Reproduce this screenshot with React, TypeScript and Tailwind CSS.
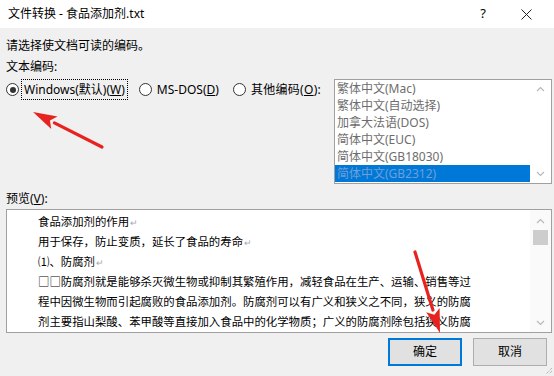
import React from 'react';

const font = { fontFamily: '"Noto Sans", "Noto Sans CJK SC", "Microsoft YaHei", sans-serif' };
const cjk = { fontFamily: '"Noto Sans CJK SC", "Microsoft YaHei", sans-serif' };

// red annotation arrow: shaft + triangular head, tip at (x2, y2)
const Arrow = ({ x1, y1, x2, y2 }: { x1: number; y1: number; x2: number; y2: number }) => {
  const dx = x2 - x1;
  const dy = y2 - y1;
  const len = Math.hypot(dx, dy);
  const ux = dx / len;
  const uy = dy / len;
  const head = 24;
  const half = 7;
  const bx = x2 - ux * head;
  const by = y2 - uy * head;
  const px = -uy;
  const py = ux;
  return (
    <g>
      <line x1={x1} y1={y1} x2={bx} y2={by} stroke="#e8231f" strokeWidth={3.2} strokeLinecap="round" />
      <polygon
        points={`${x2},${y2} ${bx + px * half},${by + py * half} ${bx + ux * 5},${by + uy * 5} ${bx - px * half},${by - py * half}`}
        fill="#e8231f"
      />
    </g>
  );
};

const Chevron = ({ up }: { up?: boolean }) => (
  <svg width="9" height="6" viewBox="0 0 9 6">
    <path d={up ? 'M1 5 L4.5 1.5 L8 5' : 'M1 1 L4.5 4.5 L8 1'} fill="none" stroke="#b8b8b8" strokeWidth="1.2" />
  </svg>
);

const Radio = ({ checked }: { checked?: boolean }) => (
  <span className="w-[13px] h-[13px] rounded-full border border-[#333] bg-white flex items-center justify-center shrink-0">
    {checked && <span className="w-[6px] h-[6px] rounded-full bg-[#333]" />}
  </span>
);

const Ret = () => <span className="text-[#a8a8a8] text-[9px] ml-[1px]">↵</span>;

const App = () => {
  const encodings = ['繁体中文(Mac)', '繁体中文(自动选择)', '加拿大法语(DOS)', '简体中文(EUC)', '简体中文(GB18030)'];

  const lines: React.ReactNode[] = [
    <>食品添加剂的作用<Ret /></>,
    <>用于保存，防止变质，延长了食品的寿命<Ret /></>,
    <>⑴、防腐剂<Ret /></>,
    '□□防腐剂就是能够杀灭微生物或抑制其繁殖作用，减轻食品在生产、运输、销售等过',
    '程中因微生物而引起腐败的食品添加剂。防腐剂可以有广义和狭义之不同，狭义的防腐',
    '剂主要指山梨酸、苯甲酸等直接加入食品中的化学物质；广义的防腐剂除包括狭义防腐'
  ];

  return (
    <div className="w-[554px] h-[376px] bg-[#f0f0f0] relative overflow-hidden text-[12px] text-black" style={font}>
      {/* Title bar */}
      <div className="h-[28px] bg-white flex items-center pl-[8px]">
        <span className="text-[12px]">文件转换 - 食品添加剂.txt</span>
        <span className="ml-auto text-[13px] w-[20px] text-center mr-[28px]">?</span>
        <svg width="11" height="11" viewBox="0 0 11 11" className="mr-[22px]">
          <path d="M0.5 0.5 L10.5 10.5 M10.5 0.5 L0.5 10.5" stroke="#222" strokeWidth="1" />
        </svg>
      </div>

      <div className="pl-[6px] pr-[2px]">
        <p className="mt-[9px] leading-[17px]">请选择使文档可读的编码。</p>
        <p className="mt-[4px] leading-[17px]">文本编码:</p>

        <div className="mt-[4px] flex items-start h-[105px]">
          <div className="flex items-center h-[21px]">
            <Radio checked />
            <span className="ml-[2px] border border-dotted border-black px-[2px] h-[21px] flex items-center">
              Windows(默认)(<span className="underline">W</span>)
            </span>
            <span className="ml-[11px]"><Radio /></span>
            <span className="ml-[5px]">MS-DOS(<span className="underline">D</span>)</span>
            <span className="ml-[14px]"><Radio /></span>
            <span className="ml-[5px] tracking-[0.3px]">其他编码(<span className="underline">O</span>):</span>
          </div>

          <div className="ml-auto w-[218px] h-[105px] border border-[#a0a0a0] bg-white flex">
            <div className="flex-1 text-[#6d6d6d]">
              {encodings.map((e) => (
                <div key={e} className="h-[17px] leading-[17px] pl-[2px]">{e}</div>
              ))}
              <div className="h-[17px] leading-[17px] pl-[2px] bg-[#0078d7] text-[#6f9fd6]">简体中文(GB2312)</div>
            </div>
            <div className="w-[21px] flex flex-col items-center justify-between py-[6px]">
              <Chevron up />
              <Chevron />
            </div>
          </div>
        </div>

        <p className="mt-[6px] leading-[17px]">预览(<span className="underline">V</span>):</p>

        <div className="mt-[2px] h-[124px] border border-[#a0a0a0] bg-white flex overflow-hidden">
          <div className="flex-1 pl-[31px] pt-[1px] text-[11.4px] overflow-hidden" style={cjk}>
            {lines.map((l, i) => (
              <div key={i} className="h-[20px] leading-[20px] whitespace-nowrap">{l}</div>
            ))}
          </div>
          <div className="w-[21px] bg-[#fafafa] flex flex-col items-center pt-[8px] pb-[6px]">
            <Chevron up />
            <div className="mt-[6px] w-[15px] h-[15px] bg-[#cdcdcd]" />
            <div className="mt-auto"><Chevron /></div>
          </div>
        </div>

        <div className="mt-[5px] flex justify-end gap-[11px] mr-[5px]">
          <button className="w-[74px] h-[28px] border-2 border-[#0078d7] bg-[#e1e1e1] text-[12px]">确定</button>
          <button className="w-[74px] h-[28px] border border-[#adadad] bg-[#e1e1e1] text-[12px]">取消</button>
        </div>
      </div>

      {/* resize grip */}
      <svg width="10" height="10" viewBox="0 0 10 10" className="absolute right-[1px] bottom-[1px]">
        <path d="M9 3 L3 9 M9 6 L6 9" stroke="#a0a0a0" strokeWidth="1" strokeDasharray="1 1" />
      </svg>

      {/* annotation arrows */}
      <svg width="554" height="376" className="absolute inset-0 pointer-events-none">
        <Arrow x1={102} y1={147} x2={33} y2={112} />
        <Arrow x1={415} y1={252} x2={440} y2={333} />
      </svg>
    </div>
  );
};

export default App;
